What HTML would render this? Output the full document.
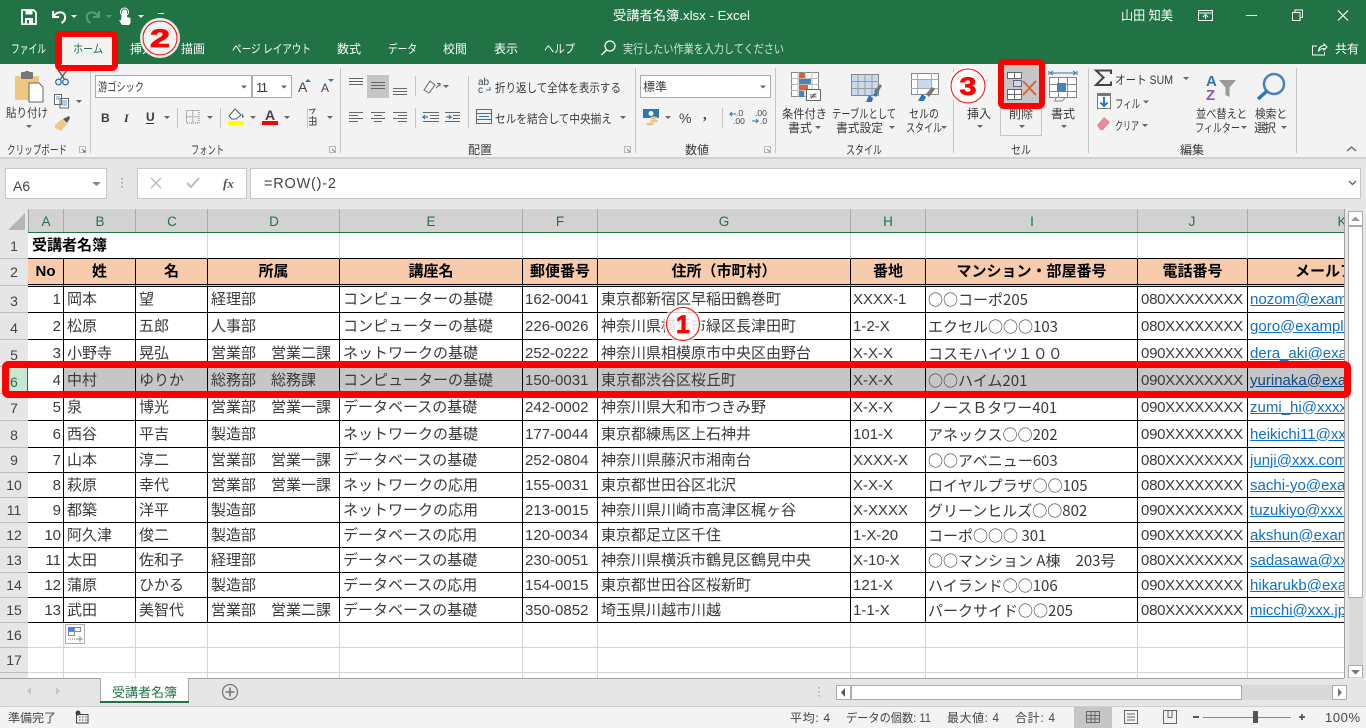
<!DOCTYPE html>
<html lang="ja"><head><meta charset="utf-8"><title>受講者名簿.xlsx - Excel</title>
<style>
html,body{margin:0;padding:0;width:1366px;height:728px;overflow:hidden;background:#e6e6e6}
svg{position:absolute;left:0;top:0}
svg text{font-family:"Liberation Sans","Noto Sans CJK JP",sans-serif;font-size:12px;fill:#3a3a3a}
svg .w{fill:#fff}
svg .n{font-size:14px;fill:#444}
svg .h{font-size:13.5px;fill:#217346}
#grid{position:absolute;left:28px;top:233px;width:1316px;height:445px;overflow:hidden;background:#fff}
table{border-collapse:separate;border-spacing:0;table-layout:fixed;width:1420px;font:15px/20px "Liberation Sans","Noto Sans CJK JP",sans-serif;color:#3a3a3a}
td{box-sizing:border-box;border-right:1px solid #000;border-bottom:1px solid #000;padding:1px 0 0 3px;white-space:nowrap;overflow:hidden}
td:nth-child(6),td:nth-child(8),td:nth-child(9),td:nth-child(11){padding-left:2px}
td:first-child{text-align:right;padding:1px 2px 0 0}
tr.l td{border-color:#d4d4d4}
tr.t td{border-bottom-color:#000;border-right-color:#d4d4d4;font-weight:bold;color:#000;text-align:left;padding-left:4px}
tr.hd td{background:#f8cbad;font-weight:bold;color:#000;text-align:center;padding:0;border-bottom:3px double #000}
tr.s td{background:#c6c6c6}
tr.s td:first-child{background:#fff}
td.j{letter-spacing:-.3px;padding-left:3px}
td.i{font-family:"Noto Sans CJK JP",sans-serif}
td.k{color:#0f6fc6;text-decoration:underline}
tr.s td.k{color:#0b4a8c}
</style></head><body>
<svg width="1366" height="728" viewBox="0 0 1366 728">
<defs><polygon id="c" points="0,0 6,0 3,3"/></defs>
<!-- title + tabs -->
<rect width="1366" height="64" fill="#217346"/>
<rect y="64" width="1366" height="93" fill="#f3f3f3"/>
<rect y="157" width="1366" height="2" fill="#d2d2d2"/>
<rect y="159" width="1366" height="50" fill="#e6e6e6"/>
<rect x="62" y="37" width="53" height="27" fill="#f3f3f3"/>
<!-- QAT -->
<path d="M22 10h11.500l2.500 2.500V24H22z" fill="none" stroke="#fff" stroke-width="1.800"/><rect x="25.500" y="10" width="7" height="4.500" fill="#fff"/><path d="M25 24v-6h8v6" fill="#fff"/><rect x="27" y="20" width="2" height="3.500" fill="#217346"/>
<path d="M53 11v6h6M53.500 16.500C56 12 62 11 64.500 14.500c1.500 3 .5 6.500-3 8.500" fill="none" stroke="#fff" stroke-width="2"/>
<use href="#c" x="71" y="15" fill="#fff"/>
<path d="M99 11v6h-6M98.500 16.500C96 12 90 11 87.500 14.500c-1.500 3-.5 6.500 3 8.500" fill="none" stroke="#5c9a7a" stroke-width="2"/>
<use href="#c" x="106" y="15" fill="#5c9a7a"/>
<path d="M122 12a2.500 2.500 0 0 1 5 0v5l3.500 1v5l-1.500 2h-7l-3-5 2 .5z" fill="#fff"/><circle cx="124.500" cy="12" r="4" fill="none" stroke="#fff" stroke-width="1"/>
<use href="#c" x="138" y="15" fill="#fff"/>
<rect x="158" y="13" width="6" height="1" fill="#fff"/>
<!-- title -->
<text class="w" x="613" y="20" style="font-size:13px" textLength="137" lengthAdjust="spacingAndGlyphs">受講者名簿.xlsx  -  Excel</text>
<text class="w" x="1121" y="20" style="font-size:13px" textLength="52" lengthAdjust="spacingAndGlyphs">山田 知美</text>
<path d="M1198.500 10.500h14v10h-14zM1198.500 13h14M1205.500 19v-4M1203 17l2.500-2.500 2.500 2.500" fill="none" stroke="#fff"/>
<rect x="1246" y="15" width="11" height="1" fill="#fff"/>
<path d="M1292.500 12.500h7.500v8h-7.500zM1295 12.500v-2.500h7.500v7.500H1300" fill="none" stroke="#fff"/>
<path d="M1338 10.500l10 10M1348 10.500l-10 10" fill="none" stroke="#fff" stroke-width="1.100"/>
<!-- tabs -->
<g class="tabs">
<text class="w" x="11" y="53" textLength="35" lengthAdjust="spacingAndGlyphs">ファイル</text>
<text x="73" y="53" textLength="30" lengthAdjust="spacingAndGlyphs" style="fill:#217346">ホーム</text>
<text class="w" x="130" y="53" textLength="24">挿入</text>
<text class="w" x="181" y="53" textLength="24">描画</text>
<text class="w" x="232" y="53" textLength="79" lengthAdjust="spacingAndGlyphs">ページ レイアウト</text>
<text class="w" x="337" y="53" textLength="24">数式</text>
<text class="w" x="388" y="53" textLength="29" lengthAdjust="spacingAndGlyphs">データ</text>
<text class="w" x="443" y="53" textLength="24">校閲</text>
<text class="w" x="494" y="53" textLength="24">表示</text>
<text class="w" x="544" y="53" textLength="31" lengthAdjust="spacingAndGlyphs">ヘルプ</text>
<text x="623" y="53" textLength="161" lengthAdjust="spacingAndGlyphs" style="fill:#cfe3d8">実行したい作業を入力してください</text>
</g>
<circle cx="610" cy="46" r="5" fill="none" stroke="#fff" stroke-width="1.200"/><path d="M606.500 50l-5 5" stroke="#fff" stroke-width="1.400"/>
<path d="M1324 44l3 3-3 3v-1.500c-3 0-4.500 1-5.500 3 0-3.500 2-5.500 5.500-6z" fill="none" stroke="#fff"/><path d="M1317 46h-4.500v9h12v-3" fill="none" stroke="#fff"/>
<text class="w" x="1335" y="53" textLength="24">共有</text>
<!-- separators -->
<g fill="#c6c6c6"><rect x="90" y="68" width="1" height="85"/><rect x="340" y="68" width="1" height="85"/><rect x="635" y="68" width="1" height="85"/><rect x="775" y="68" width="1" height="85"/><rect x="953" y="68" width="1" height="85"/><rect x="1088" y="68" width="1" height="85"/><rect x="1296" y="68" width="1" height="85"/>
<rect x="177" y="108" width="1" height="20"/><rect x="220" y="108" width="1" height="20"/><rect x="307" y="108" width="1" height="20"/><rect x="415" y="76" width="1" height="20"/><rect x="415" y="108" width="1" height="20"/><rect x="468" y="76" width="1" height="52"/><rect x="722" y="108" width="1" height="20"/></g>
<!-- clipboard -->
<rect x="15" y="76" width="24" height="24" rx="1" fill="#efc77f"/><rect x="21" y="72" width="12" height="7" rx="1" fill="#777"/><rect x="25" y="71" width="4" height="3" fill="#777"/>
<path d="M29 83h10l4 4v15H29z" fill="#fff" stroke="#666"/>
<text x="6" y="117" textLength="42" lengthAdjust="spacingAndGlyphs">貼り付け</text><use href="#c" x="26" y="125" fill="#666"/>
<path d="M58 70l7 10M67 70l-7 10" stroke="#555" stroke-width="1.300"/><circle cx="58.500" cy="82" r="2.800" fill="none" stroke="#2e75b6" stroke-width="1.300"/><circle cx="65.500" cy="82" r="2.800" fill="none" stroke="#2e75b6" stroke-width="1.300"/>
<path d="M54.500 94.500h7v10h-7zM60 98.500h8.500v9.500H60z" fill="#fff" stroke="#666"/><path d="M62 101h5M62 103h5M62 105h5M56 97h4M56 99h3" stroke="#2e75b6" stroke-width=".8"/>
<use href="#c" x="76" y="100" fill="#666"/>
<path d="M55 125l7-6 5 5-6 7-6-3z" fill="#efc77f"/><path d="M63 119l6-3 1 2-3 5z" fill="#555"/>
<text x="7" y="154" textLength="60" lengthAdjust="spacingAndGlyphs">クリップボード</text>
<path d="M79.500 146.500h6v6h-6z" fill="none" stroke="#aaa" stroke-width=".8"/><path d="M82 149l3 3M85 150v2h-2" stroke="#666" fill="none" stroke-width=".8"/>
<!-- font -->
<rect x="95.500" y="75.500" width="156" height="22" fill="#fff" stroke="#ababab"/><rect x="252.500" y="75.500" width="39" height="22" fill="#fff" stroke="#ababab"/>
<text x="98" y="91" textLength="46" lengthAdjust="spacingAndGlyphs">游ゴシック</text><text x="256" y="92" textLength="12" style="font-size:13px">11</text>
<use href="#c" x="241" y="85.500" fill="#666"/><use href="#c" x="281" y="85.500" fill="#666"/>
<text x="298" y="92" style="font-size:14px;fill:#444">A</text><polygon points="305,82 311,82 308,79" fill="#2e75b6"/>
<text x="321" y="92" style="font-size:12px;fill:#444">A</text><polygon points="328,79 334,79 331,82" fill="#2e75b6"/>
<text x="101" y="122" style="font-weight:bold;font-family:'Liberation Sans'">B</text>
<text x="124" y="122" style="font-style:italic;font-family:'Liberation Serif';font-weight:bold">I</text>
<text x="146" y="121" style="font-weight:bold;font-family:'Liberation Sans'">U</text><rect x="146" y="123" width="8" height="1" fill="#333"/>
<use href="#c" x="164" y="116" fill="#666"/>
<path d="M186.500 110.500h12.500v12.500h-12.500zM192.750 110.500V123M186.500 116.750H199" fill="none" stroke="#777" stroke-dasharray="1 1"/><use href="#c" x="207" y="116" fill="#666"/>
<path d="M229 116l6-7 6 6-5 4h-4z" fill="#fff" stroke="#555"/><path d="M242 113l2 4-2 1z" fill="#2e75b6"/><rect x="228" y="121" width="16" height="4" fill="#ff0"/><use href="#c" x="250" y="116" fill="#666"/>
<text x="265" y="120" style="font-size:14px;fill:#444;font-weight:bold;font-family:'Liberation Sans'">A</text><rect x="262" y="121" width="16" height="4" fill="#f00"/><use href="#c" x="284" y="116" fill="#666"/>
<path d="M309 110l6-1-3 5M309 118h7v7h-7M309 121.500h7M312.500 116v9" fill="none" stroke="#555"/><use href="#c" x="327" y="116" fill="#666"/>
<text x="191" y="154" textLength="33" lengthAdjust="spacingAndGlyphs">フォント</text>
<path d="M329.500 146.500h6v6h-6z" fill="none" stroke="#aaa" stroke-width=".8"/><path d="M332 149l3 3" stroke="#666" stroke-width=".8"/>
<!-- align -->
<rect x="367" y="75" width="22" height="23" fill="#c6c6c6"/>
<g fill="none" stroke="#666"><path d="M349 78.500h14M349 81.500h14M349 84.500h14"/><path d="M371 82.500h14M371 85.500h14M371 88.500h14"/><path d="M393 88.500h14M393 91.500h14M393 94.500h14"/>
<path d="M349 112.500h14M349 115.500h9M349 118.500h14M349 121.500h9"/><path d="M371 112.500h14M374 115.500h8M371 118.500h14M374 121.500h8"/><path d="M393 112.500h14M398 115.500h9M393 118.500h14M398 121.500h9"/>
<path d="M430 115.500h9M430 118.500h9M423 112.500h16M423 121.500h16"/><path d="M453 115.500h7M453 118.500h7M445 112.500h15M445 121.500h15"/>
<path d="M424 90l6-9 5 4-6 8z"/><path d="M436 88l4-4M437 83.500h3v3"/></g>
<path d="M428 117h-5l2-2M423 117l2 2" fill="none" stroke="#2e75b6" stroke-width="1.200"/><path d="M446 117h5l-2-2M451 117l-2 2" fill="none" stroke="#2e75b6" stroke-width="1.200"/>
<use href="#c" x="443" y="85" fill="#666"/>
<text x="478" y="85" style="font-size:10px;fill:#444">ab</text><text x="478" y="93" style="font-size:10px;fill:#444">c</text><path d="M490 87v3h-4" fill="none" stroke="#2e75b6"/>
<text x="495" y="92" textLength="126" lengthAdjust="spacingAndGlyphs">折り返して全体を表示する</text>
<path d="M476.500 109.500h15v14h-15zM476.500 113.500h15M476.500 119.500h15" fill="none" stroke="#666"/><path d="M479 116.500h10" stroke="#2e75b6"/>
<text x="495" y="123" textLength="117" lengthAdjust="spacingAndGlyphs">セルを結合して中央揃え</text><use href="#c" x="620" y="116" fill="#666"/>
<text x="468" y="154" textLength="24">配置</text>
<path d="M624.500 146.500h6v6h-6z" fill="none" stroke="#aaa" stroke-width=".8"/><path d="M627 149l3 3" stroke="#666" stroke-width=".8"/>
<!-- number -->
<rect x="640.500" y="75.500" width="130" height="22" fill="#fff" stroke="#ababab"/>
<text x="643" y="91" textLength="24">標準</text><use href="#c" x="760" y="85.500" fill="#666"/>
<rect x="643" y="109" width="16" height="9" fill="#2e75b6"/><circle cx="651" cy="113.500" r="2.500" fill="#fff"/><ellipse cx="654" cy="118" rx="4" ry="1.500" fill="#efc77f"/><ellipse cx="654" cy="121" rx="4" ry="1.500" fill="#efc77f"/><ellipse cx="650" cy="124" rx="4" ry="1.500" fill="#efc77f"/>
<use href="#c" x="665" y="116" fill="#666"/>
<text x="679" y="123" style="font-size:14px;fill:#444;font-family:'Liberation Sans'">%</text>
<text x="703" y="119" style="font-size:15px;fill:#444;font-weight:bold;font-family:'Liberation Serif'">,</text>
<text x="736" y="116" style="font-size:8.500px;fill:#444;font-family:'Liberation Sans'">.0</text><text x="733" y="124" style="font-size:8.500px;fill:#444;font-family:'Liberation Sans'">.00</text><path d="M736 114h-6l2-2M730 114l2 2" fill="none" stroke="#2e75b6"/>
<text x="755" y="116" style="font-size:8.500px;fill:#444;font-family:'Liberation Sans'">.00</text><text x="760" y="124" style="font-size:8.500px;fill:#444;font-family:'Liberation Sans'">.0</text><path d="M752 121h6l-2-2M758 121l-2 2" fill="none" stroke="#2e75b6"/>
<text x="685" y="154" textLength="24">数値</text>
<path d="M764.500 146.500h6v6h-6z" fill="none" stroke="#aaa" stroke-width=".8"/><path d="M767 149l3 3" stroke="#666" stroke-width=".8"/>
<!-- styles -->
<rect x="791.500" y="72.500" width="27" height="24" fill="#fff" stroke="#888"/><path d="M791 78.500h28M791 84.500h28M791 90.500h28M798 72v25M805 72v25M812 72v25" stroke="#bbb"/><rect x="799" y="73" width="6" height="5" fill="#d9643a"/><rect x="799" y="79" width="12" height="5" fill="#4a82bd"/><rect x="799" y="85" width="9" height="5" fill="#d9643a"/><rect x="799" y="91" width="5" height="6" fill="#4a82bd"/>
<rect x="806.500" y="89.500" width="14" height="11" fill="#fff" stroke="#666"/><text x="809" y="99" style="font-size:10px;fill:#333;font-family:'DejaVu Sans'">≠</text>
<text x="782" y="118" textLength="45" lengthAdjust="spacingAndGlyphs">条件付き</text><text x="788" y="132" textLength="24">書式</text><use href="#c" x="815" y="126" fill="#666"/>
<rect x="851.500" y="74.500" width="27" height="21" fill="#c9d9ee" stroke="#888"/><path d="M851 81.500h28M851 88.500h28M858 74v21M865 74v21M872 74v21" stroke="#9a9a9a"/>
<path d="M866 102l3-7 4 3-1 4h-6zM873 95l7-9 1 1-5 10z" fill="#2e75b6"/><path d="M874 91l6-7 2 2-6 8z" fill="#777"/>
<text x="832" y="118" textLength="64" lengthAdjust="spacingAndGlyphs">テーブルとして</text><text x="836" y="132" textLength="47" lengthAdjust="spacingAndGlyphs">書式設定</text><use href="#c" x="889" y="126" fill="#666"/>
<rect x="911.500" y="73.500" width="27" height="21" fill="#fff" stroke="#888"/><rect x="917" y="79" width="14" height="9" fill="#c9d9ee"/><path d="M911 79.500h27M911 88.500h27M917.500 73v21M931.500 73v21" stroke="#aaa"/>
<path d="M918 101l4-7 4 3-2 4z" fill="#2e75b6"/><path d="M926 94l6-7 3 2-6 8z" fill="#777"/>
<text x="909" y="118" textLength="30" lengthAdjust="spacingAndGlyphs">セルの</text><text x="906" y="132" textLength="36" lengthAdjust="spacingAndGlyphs">スタイル</text><use href="#c" x="941" y="126" fill="#666"/>
<text x="846" y="154" textLength="36" lengthAdjust="spacingAndGlyphs">スタイル</text>
<!-- cells -->
<text x="967" y="118" textLength="24">挿入</text><use href="#c" x="977" y="125" fill="#666"/>
<rect x="982" y="80" width="5" height="5" fill="#c9d9ee" stroke="#888"/>
<rect x="1000.500" y="64.500" width="41" height="71" fill="#f3f3f3" stroke="#c6c6c6"/>
<rect x="1001" y="65" width="40" height="44" fill="#c6c6c6"/>
<text x="1009" y="118" textLength="24">削除</text><use href="#c" x="1019" y="125" fill="#666"/>
<path d="M1007.500 72.500h14v6h-14zM1014.500 72.500v6M1007.500 89.500h14v10h-14zM1007.500 94.500h14M1014.500 89.500v10" fill="#fff" stroke="#666"/><rect x="1013.500" y="80.500" width="8" height="6" fill="#c9d9ee" stroke="#666"/>
<path d="M1023 81l13 14M1036 81l-13 14" stroke="#d9643a" stroke-width="2"/>
<path d="M1049.500 77.500h27v20h-27zM1049.500 84.500h27M1049.500 91.500h27M1058.500 77.500v20M1067.500 77.500v20" fill="#fff" stroke="#888"/><rect x="1057" y="83" width="9" height="9" fill="#4a82bd"/>
<path d="M1050 73h26M1050 73l3-2M1050 73l3 2M1076 73l-3-2M1076 73l-3 2" stroke="#2e75b6" fill="none"/><path d="M1049 71v4M1077 71v4" stroke="#666"/>
<path d="M1056 98l-1 3h7l3-3" fill="none" stroke="#888"/>
<text x="1051" y="118" textLength="24">書式</text><use href="#c" x="1061" y="125" fill="#666"/>
<text x="1011" y="154" textLength="20" lengthAdjust="spacingAndGlyphs">セル</text>
<!-- editing -->
<path d="M1111 74v-3.500h-15l7.500 7-7.500 7.500h15v-3.500" fill="none" stroke="#444" stroke-width="2"/>
<text x="1115" y="84" textLength="58" lengthAdjust="spacingAndGlyphs">オート SUM</text><use href="#c" x="1183" y="77" fill="#666"/>
<rect x="1097.500" y="93.500" width="13" height="15" fill="#fff" stroke="#777"/><rect x="1097" y="93" width="14" height="3" fill="#777"/><path d="M1104 97v9M1100.500 102.500l3.500 3.500 3.500-3.500" fill="none" stroke="#2e75b6" stroke-width="2"/>
<text x="1115" y="108" textLength="25" lengthAdjust="spacingAndGlyphs">フィル</text><use href="#c" x="1143" y="100.500" fill="#666"/>
<path d="M1097 125l7-8 6 5-7 8h-3z" fill="#e88a9c"/>
<text x="1115" y="130" textLength="24" lengthAdjust="spacingAndGlyphs">クリア</text><use href="#c" x="1142" y="124" fill="#666"/>
<text x="1206" y="86" style="font-size:15px;font-weight:bold;fill:#2e75b6;font-family:'Liberation Sans'">A</text><text x="1206" y="100" style="font-size:15px;font-weight:bold;fill:#8e5ab5;font-family:'Liberation Sans'">Z</text>
<path d="M1219 80h17l-6.500 7.500V97l-4-2v-7.500z" fill="#999"/>
<text x="1196" y="118" textLength="51" lengthAdjust="spacingAndGlyphs">並べ替えと</text><text x="1195" y="132" textLength="45" lengthAdjust="spacingAndGlyphs">フィルター</text><use href="#c" x="1241" y="126" fill="#666"/>
<circle cx="1274" cy="84" r="10" fill="none" stroke="#4a82bd" stroke-width="2.500"/><path d="M1267 91l-9 8" stroke="#2e75b6" stroke-width="3.500"/>
<text x="1255" y="118" textLength="32" lengthAdjust="spacingAndGlyphs">検索と</text><text x="1254" y="132" textLength="22">選択</text><use href="#c" x="1281" y="126" fill="#666"/>
<text x="1180" y="154" textLength="24">編集</text>
<path d="M1347 151l4.500-4 4.500 4" fill="none" stroke="#666" stroke-width="1.400"/>
<!-- formula bar -->
<rect x="5.500" y="168.500" width="101" height="30" fill="#fff" stroke="#c6c6c6"/>
<text x="13" y="191" style="font-size:14px;fill:#444">A6</text><polygon points="92,182 101,182 96.500,186" fill="#888"/>
<path d="M122 178v1.500M122 182v1.500M122 186v1.500" stroke="#aaa" stroke-width="2"/>
<rect x="137.500" y="168.500" width="109" height="30" fill="#fff" stroke="#c6c6c6"/>
<path d="M151 178l10 10M161 178l-10 10" stroke="#bbb" stroke-width="1.500"/><path d="M187 183l4 4 8-9" fill="none" stroke="#bbb" stroke-width="2"/>
<text x="223" y="188" style="font-size:13px;font-style:italic;font-weight:bold;fill:#555;font-family:'Liberation Serif'">fx</text>
<rect x="250.500" y="168.500" width="1110" height="30" fill="#fff" stroke="#c6c6c6"/>
<text x="264" y="188" style="font-size:14.500px;fill:#444" textLength="72">=ROW()-2</text>
<path d="M1349 181l3.500 3.500 3.500-3.500" fill="none" stroke="#666" stroke-width="1.400"/>
<!-- headers -->
<rect x="0" y="209" width="28" height="469" fill="#e6e6e6"/>
<rect x="28" y="209" width="1316" height="23" fill="#d2d2d2"/>
<polygon points="25,213 25,230 8,230" fill="#b5b5b5"/>
<g fill="#ababab"><rect x="63" y="209" width="1" height="23"/><rect x="135" y="209" width="1" height="23"/><rect x="207" y="209" width="1" height="23"/><rect x="339" y="209" width="1" height="23"/><rect x="522" y="209" width="1" height="23"/><rect x="597" y="209" width="1" height="23"/><rect x="850" y="209" width="1" height="23"/><rect x="925" y="209" width="1" height="23"/><rect x="1137" y="209" width="1" height="23"/><rect x="1247" y="209" width="1" height="23"/></g>
<g text-anchor="middle">
<text class="h" x="46" y="226">A</text><text class="h" x="100" y="226">B</text><text class="h" x="172" y="226">C</text><text class="h" x="274" y="226">D</text><text class="h" x="431" y="226">E</text><text class="h" x="560" y="226">F</text><text class="h" x="724" y="226">G</text><text class="h" x="888" y="226">H</text><text class="h" x="1032" y="226">I</text><text class="h" x="1192" y="226">J</text><text class="h" x="1342" y="226">K</text>
<text class="n" x="14" y="251">1</text><text class="n" x="14" y="277">2</text><text class="n" x="14" y="306">3</text><text class="n" x="14" y="333">4</text><text class="n" x="14" y="360">5</text>
<text class="n" x="14" y="413">7</text><text class="n" x="14" y="440">8</text><text class="n" x="14" y="465">9</text><text class="n" x="14" y="490">10</text><text class="n" x="14" y="515">11</text><text class="n" x="14" y="540">12</text><text class="n" x="14" y="565">13</text><text class="n" x="14" y="590">14</text><text class="n" x="14" y="615">15</text><text class="n" x="14" y="640">16</text><text class="n" x="14" y="665">17</text>
</g>
<g fill="#bcbcbc"><rect y="258" width="28" height="1"/><rect y="285" width="28" height="1"/><rect y="312" width="28" height="1"/><rect y="339" width="28" height="1"/><rect y="366" width="28" height="1"/><rect y="393" width="28" height="1"/><rect y="420" width="28" height="1"/><rect y="447" width="28" height="1"/><rect y="472" width="28" height="1"/><rect y="497" width="28" height="1"/><rect y="522" width="28" height="1"/><rect y="547" width="28" height="1"/><rect y="572" width="28" height="1"/><rect y="597" width="28" height="1"/><rect y="622" width="28" height="1"/><rect y="647" width="28" height="1"/><rect y="672" width="28" height="1"/></g>
<rect x="28" y="209" width="1" height="469" fill="#a0a0a0"/>
<rect x="9" y="367" width="19" height="26" fill="#c8e6d4"/><rect x="27" y="367" width="2" height="26" fill="#217346"/>
<text x="10" y="387" style="font-size:14px;fill:#217346">6</text>
<rect x="28" y="232" width="1316" height="2" fill="#217346"/>
<!-- v scroll -->
<rect x="1344" y="209" width="22" height="469" fill="#e6e6e6"/>
<rect x="1344" y="209" width="1" height="469" fill="#a0a0a0"/>
<rect x="1348.500" y="211.500" width="14" height="14" fill="#fff" stroke="#ababab"/><polygon points="1351,221 1360,221 1355.500,216.500" fill="#999"/>
<rect x="1348.500" y="226.500" width="14" height="371" fill="#fff" stroke="#ababab"/>
<rect x="1349" y="598" width="14" height="67" fill="#dadada"/>
<rect x="1348.500" y="665.500" width="14" height="12.500" fill="#fff" stroke="#ababab"/><polygon points="1351,670 1360,670 1355.500,674.500" fill="#777"/>
<!-- tabs strip -->
<rect y="678" width="1366" height="28" fill="#e6e6e6"/>
<rect x="0" y="678" width="1344" height="1" fill="#a0a0a0"/>
<polygon points="31,687 31,695 27,691" fill="#c6c6c6"/><polygon points="56,687 56,695 60,691" fill="#c6c6c6"/>
<rect x="100" y="678" width="89" height="25" fill="#fff"/><path d="M100.500 678v25M188.500 678v25" stroke="#ababab"/><rect x="100" y="701" width="89" height="2" fill="#217346"/>
<text x="112" y="697" textLength="65" style="font-size:13px;fill:#217346">受講者名簿</text>
<circle cx="230" cy="692" r="7.500" fill="none" stroke="#777" stroke-width="1.300"/><path d="M225.500 692h9M230 687.500v9" stroke="#777" stroke-width="1.600"/>
<path d="M819 687v1.500M819 691v1.500M819 695v1.500" stroke="#bbb" stroke-width="2"/>
<rect x="836" y="685" width="496" height="15" fill="#d8d8d8"/>
<rect x="836.500" y="685.500" width="14" height="14" fill="#fff" stroke="#ababab"/><polygon points="845,688 845,697 841,692.500" fill="#555"/>
<rect x="851.500" y="685.500" width="390" height="14" fill="#fff" stroke="#ababab"/>
<rect x="1332.500" y="685.500" width="14" height="14" fill="#fff" stroke="#ababab"/><polygon points="1338,688 1338,697 1342,692.500" fill="#777"/>
<!-- status bar -->
<rect y="706" width="1366" height="22" fill="#f3f3f3"/><rect y="706" width="1366" height="1" fill="#d0d0d0"/>
<text x="8" y="722" textLength="48" style="font-size:12px;fill:#444">準備完了</text>
<circle cx="78" cy="713" r="2.500" fill="#444"/><path d="M76.500 714.500H88v8.500H76.500zM79 717h1.500M82 717h1.500M85 717h1.500M79 720h1.500M82 720h1.500M85 720h1.500" fill="none" stroke="#444"/>
<text x="790" y="722" textLength="40" style="fill:#444">平均: 4</text>
<text x="846" y="722" textLength="85" lengthAdjust="spacingAndGlyphs" style="fill:#444">データの個数: 11</text>
<text x="947" y="722" textLength="52" style="fill:#444">最大値: 4</text>
<text x="1015" y="722" textLength="40" style="fill:#444">合計: 4</text>
<rect x="1074" y="707" width="38" height="21" fill="#c6c6c6"/>
<path d="M1086.500 711.500h13v11h-13zM1086.500 715.500h13M1086.500 719h13M1091 711.500v11M1095 711.500v11" fill="none" stroke="#666"/>
<path d="M1124.500 710.500h13v13h-13zM1127 714h8M1127 717h8M1127 720h8" fill="none" stroke="#666"/>
<path d="M1163.500 710.500h13v13h-13zM1168 710.500v7h4v-7" fill="none" stroke="#666"/>
<rect x="1193" y="716" width="6" height="2" fill="#555"/>
<rect x="1203" y="717" width="88" height="1" fill="#888"/>
<rect x="1253" y="711" width="5" height="12" fill="#555"/>
<path d="M1299 717h6M1302 714v6" stroke="#555" stroke-width="1.800"/>
<text x="1325" y="722" textLength="35" style="fill:#444;font-size:13px">100%</text>
<!-- callouts 2 and 3, home highlight -->
<rect x="58" y="34" width="57" height="34" rx="3" fill="none" stroke="#f00" stroke-width="6"/>
<rect x="1001" y="62" width="41" height="44" rx="3" fill="none" stroke="#f00" stroke-width="6"/>
<circle cx="160" cy="38" r="20" fill="#fff" fill-opacity=".9"/><circle cx="160" cy="38" r="17" fill="#fff" fill-opacity=".3" stroke="#f00"/>
<text x="150" y="47" textLength="20" lengthAdjust="spacingAndGlyphs" style="font-size:25px;font-weight:bold;fill:#f00;font-family:'Liberation Sans';stroke:#f00;stroke-width:.8">2</text>
<circle cx="968" cy="86" r="20" fill="#fff" fill-opacity=".9"/><circle cx="968" cy="86" r="17" fill="#fff" fill-opacity=".3" stroke="#f00"/>
<text x="959.500" y="95" textLength="17" lengthAdjust="spacingAndGlyphs" style="font-size:25px;font-weight:bold;fill:#f00;font-family:'Liberation Sans';stroke:#f00;stroke-width:.8">3</text>
</svg>

<div id="grid"><table>
<colgroup><col style="width:36px"><col style="width:72px"><col style="width:72px"><col style="width:132px"><col style="width:183px"><col style="width:75px"><col style="width:253px"><col style="width:75px"><col style="width:212px"><col style="width:110px"><col style="width:200px"></colgroup>
<tr class="l t" style="height:26px"><td colspan="3" style="height:26px">受講者名簿</td><td></td><td></td><td></td><td></td><td></td><td></td><td></td><td></td></tr>
<tr class="hd"><td style="height:28px;text-align:center;padding:0">No</td><td>姓</td><td>名</td><td>所属</td><td>講座名</td><td>郵便番号</td><td>住所（市町村）</td><td>番地</td><td>マンション・部屋番号</td><td>電話番号</td><td>メールアドレス</td></tr>
<tr><td style="height:26px">1</td><td>岡本</td><td>望</td><td>経理部</td><td>コンピューターの基礎</td><td>162-0041</td><td>東京都新宿区早稲田鶴巻町</td><td>XXXX-1</td><td class="i">○○コーポ205</td><td class="j">080XXXXXXXX</td><td class="k">nozom@example.com</td></tr>
<tr><td style="height:27px">2</td><td>松原</td><td>五郎</td><td>人事部</td><td>コンピューターの基礎</td><td>226-0026</td><td>神奈川県横浜市緑区長津田町</td><td>1-2-X</td><td class="i">エクセル○○○103</td><td class="j">080XXXXXXXX</td><td class="k">goro@example.com</td></tr>
<tr><td style="height:27px">3</td><td>小野寺</td><td>晃弘</td><td>営業部　営業二課</td><td>ネットワークの基礎</td><td>252-0222</td><td>神奈川県相模原市中央区由野台</td><td>X-X-X</td><td class="i">コスモハイツ１００</td><td class="j">090XXXXXXXX</td><td class="k">dera_aki@example.com</td></tr>
<tr class="s"><td style="height:27px">4</td><td>中村</td><td>ゆりか</td><td>総務部　総務課</td><td>コンピューターの基礎</td><td>150-0031</td><td>東京都渋谷区桜丘町</td><td>X-X-X</td><td class="i">○○ハイム201</td><td class="j">090XXXXXXXX</td><td class="k">yurinaka@example.com</td></tr>
<tr><td style="height:27px">5</td><td>泉</td><td>博光</td><td>営業部　営業一課</td><td>データベースの基礎</td><td>242-0002</td><td>神奈川県大和市つきみ野</td><td>X-X-X</td><td class="i">ノースＢタワー401</td><td class="j">090XXXXXXXX</td><td class="k">zumi_hi@xxxx.com</td></tr>
<tr><td style="height:27px">6</td><td>西谷</td><td>平吉</td><td>製造部</td><td>ネットワークの基礎</td><td>177-0044</td><td>東京都練馬区上石神井</td><td>101-X</td><td class="i">アネックス○○202</td><td class="j">090XXXXXXXX</td><td class="k">heikichi11@xxx.com</td></tr>
<tr><td style="height:25px">7</td><td>山本</td><td>淳二</td><td>営業部　営業一課</td><td>データベースの基礎</td><td>252-0804</td><td>神奈川県藤沢市湘南台</td><td>XXXX-X</td><td class="i">○○アベニュー603</td><td class="j">080XXXXXXXX</td><td class="k">junji@xxx.com</td></tr>
<tr><td style="height:25px">8</td><td>萩原</td><td>幸代</td><td>営業部　営業一課</td><td>ネットワークの応用</td><td>155-0031</td><td>東京都世田谷区北沢</td><td>X-X-X</td><td class="i">ロイヤルプラザ○○105</td><td class="j">080XXXXXXXX</td><td class="k">sachi-yo@example.com</td></tr>
<tr><td style="height:25px">9</td><td>都築</td><td>洋平</td><td>製造部</td><td>ネットワークの応用</td><td>213-0015</td><td>神奈川県川崎市高津区梶ヶ谷</td><td>X-XXXX</td><td class="i">グリーンヒルズ○○802</td><td class="j">090XXXXXXXX</td><td class="k">tuzukiyo@xxx.jp</td></tr>
<tr><td style="height:25px">10</td><td>阿久津</td><td>俊二</td><td>製造部</td><td>データベースの応用</td><td>120-0034</td><td>東京都足立区千住</td><td>1-X-20</td><td class="i">コーポ○○○ 301</td><td class="j">090XXXXXXXX</td><td class="k">akshun@example.com</td></tr>
<tr><td style="height:25px">11</td><td>太田</td><td>佐和子</td><td>経理部</td><td>データベースの基礎</td><td>230-0051</td><td>神奈川県横浜市鶴見区鶴見中央</td><td>X-10-X</td><td class="i">○○マンション A棟　203号</td><td class="j">080XXXXXXXX</td><td class="k">sadasawa@xxx.com</td></tr>
<tr><td style="height:25px">12</td><td>蒲原</td><td>ひかる</td><td>製造部</td><td>データベースの応用</td><td>154-0015</td><td>東京都世田谷区桜新町</td><td>121-X</td><td class="i">ハイランド○○106</td><td class="j">090XXXXXXXX</td><td class="k">hikarukb@example.com</td></tr>
<tr><td style="height:25px">13</td><td>武田</td><td>美智代</td><td>営業部　営業二課</td><td>データベースの基礎</td><td>350-0852</td><td>埼玉県川越市川越</td><td>1-1-X</td><td class="i">パークサイド○○205</td><td class="j">080XXXXXXXX</td><td class="k">micchi@xxx.jp</td></tr>
<tr class="l"><td style="height:25px"></td><td></td><td></td><td></td><td></td><td></td><td></td><td></td><td></td><td></td><td></td></tr>
<tr class="l"><td style="height:25px"></td><td></td><td></td><td></td><td></td><td></td><td></td><td></td><td></td><td></td><td></td></tr>
<tr class="l"><td style="height:25px"></td><td></td><td></td><td></td><td></td><td></td><td></td><td></td><td></td><td></td><td></td></tr>
</table></div>

<svg width="1366" height="728" viewBox="0 0 1366 728" style="pointer-events:none">
<rect x="5.500" y="364.500" width="1342" height="30" rx="3" fill="none" stroke="#f00" stroke-width="7"/>
<rect x="65.500" y="624.500" width="19" height="19" fill="#fff" stroke="#ababab"/><rect x="68" y="627" width="6" height="4" fill="#4285f4"/><rect x="74.500" y="627.500" width="6" height="4" fill="none" stroke="#888"/><rect x="68.500" y="631.500" width="6" height="4" fill="none" stroke="#888"/><path d="M68 639h9" stroke="#888" stroke-dasharray="1 1"/><path d="M77 639h6M80 636v6" stroke="#888"/>
<circle cx="683" cy="324" r="19.500" fill="#fff" fill-opacity=".7"/><circle cx="683" cy="324" r="16.500" fill="#fff" fill-opacity=".4" stroke="#f00"/>
<text x="676" y="333" style="font-size:25px;font-weight:bold;fill:#f00;font-family:'Liberation Sans';stroke:#f00;stroke-width:.8">1</text>
</svg>
</body></html>
